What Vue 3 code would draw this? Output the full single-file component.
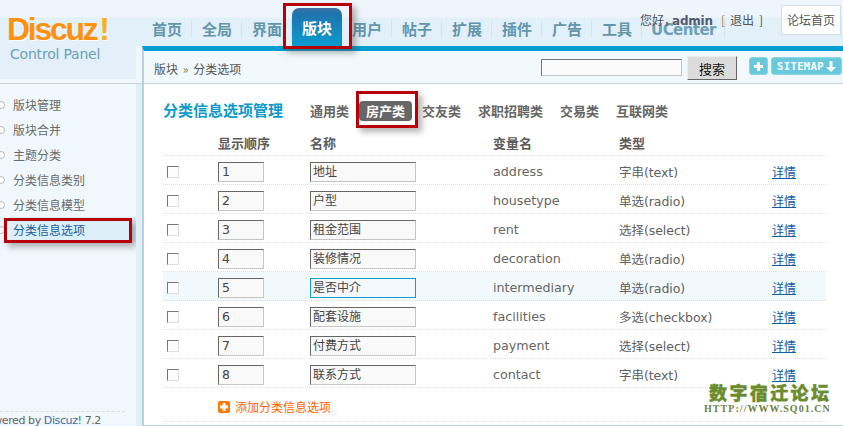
<script setup>
const menu = ['版块管理', '版块合并', '主题分类', '分类信息类别', '分类信息模型', '分类信息选项']
const nav = ['首页', '全局', '界面', '版块', '用户', '帖子', '扩展', '插件', '广告', '工具', 'UCenter']
const tabs = ['通用类', '房产类', '交友类', '求职招聘类', '交易类', '互联网类']
const rows = [
  ['1', '地址', 'address', '字串(text)'],
  ['2', '户型', 'housetype', '单选(radio)'],
  ['3', '租金范围', 'rent', '选择(select)'],
  ['4', '装修情况', 'decoration', '单选(radio)'],
  ['5', '是否中介', 'intermediary', '单选(radio)'],
  ['6', '配套设施', 'facilities', '多选(checkbox)'],
  ['7', '付费方式', 'payment', '选择(select)'],
  ['8', '联系方式', 'contact', '字串(text)'],
]
</script>

<template>
  <div class="page">
    <header class="head">
      <div class="logo">
        <div class="brand">Discuz<span>!</span></div>
        <div class="cp">Control Panel</div>
      </div>
      <nav class="nav">
        <a v-for="n in nav" :key="n" :class="['nav-item', { on: n === '版块', wide: n === 'UCenter' }]">{{ n }}</a>
      </nav>
      <div class="user">您好，<b>admin</b><i>[</i>退出<i>]</i></div>
      <div class="home">论坛首页</div>
      <div class="mark mark-nav"></div>
    </header>

    <div class="body">
      <aside class="side">
        <div class="side-top"></div>
        <div class="side-low">
          <ul class="menu">
            <li v-for="m in menu" :key="m" :class="{ on: m === '分类信息选项' }"><s></s>{{ m }}</li>
          </ul>
          <div class="mark mark-side"></div>
          <div class="foot">Powered by <a>Discuz!</a> 7.2</div>
        </div>
      </aside>

      <main class="main">
        <div class="crumb">
          <span class="path">版块 <em>»</em> 分类选项</span>
          <div class="search">
            <span class="field"></span>
            <span class="go">搜索</span>
          </div>
          <span class="pill plus">
            <svg width="11" height="11" viewBox="0 0 11 11"><path d="M4 1h3v3h3v3H7v3H4V7H1V4h3z" fill="#fff"/></svg>
          </span>
          <span class="pill site">SITEMAP<svg width="10" height="11" viewBox="0 0 10 11"><path d="M3.500 0h3v6H10L5 11 0 6h3.500z" fill="#fff"/></svg></span>
        </div>

        <section class="content">
          <div class="title-row">
            <h3>分类信息选项管理</h3>
            <div class="tabs">
              <a v-for="t in tabs" :key="t" :class="['tab', { on: t === '房产类' }]">{{ t }}</a>
            </div>
            <div class="mark mark-tab"></div>
          </div>

          <div class="row th">
            <span></span><span>显示顺序</span><span>名称</span><span>变量名</span><span>类型</span><span></span>
          </div>
          <div v-for="r in rows" :key="r[0]" :class="['row', 'item', { hover: r[0] === '5' }]">
            <span class="check"></span>
            <span class="inp num">{{ r[0] }}</span>
            <span :class="['inp', 'name', { focus: r[0] === '5' }]">{{ r[1] }}</span>
            <span class="var">{{ r[2] }}</span>
            <span class="type">{{ r[3] }}</span>
            <a class="more">详情</a>
          </div>
          <div class="row add">
            <span></span>
            <a class="add-link">
              <svg width="12" height="12" viewBox="0 0 12 12"><rect width="12" height="12" rx="2" fill="#f70"/><path d="M4.500 2h3v2.500H10v3H7.500V10h-3V7.500H2v-3h2.500z" fill="#fff"/></svg>
              添加分类信息选项
            </a>
          </div>
          <div class="wm">
            <b>数字宿迁论坛</b>
            <span>HTTP://WWW.SQ01.CN</span>
          </div>
        </section>
      </main>
    </div>
  </div>
</template>

<style>
html, body { margin: 0; padding: 0; background: #eef7fc; overflow: hidden; }
</style>

<style scoped>
.page {
  width: 843px; height: 426px; overflow: hidden; position: relative;
  font-family: "Noto Sans CJK SC", "Liberation Sans", sans-serif; font-size: 12px; color: #666;
  background: #f0f8fd;
}
.head {
  height: 46px; display: flex; position: relative; z-index: 2;
  background: linear-gradient(#eef5fc 0, #eef5fc 17px, #e2f0f9 18px, #e3f0f9 46px);
}
.logo { width: 142px; flex: none; box-sizing: border-box; padding: 14px 0 0 7px; }
.brand {
  font: bold 32px/30px "Liberation Sans", sans-serif; letter-spacing: -2.300px; color: #ff9010;
  text-shadow: 1px 1px 0 #fff;
}
.brand span { color: #ffb020; margin-left: 3px; }
.cp { font: 14px/16px "DejaVu Sans", sans-serif; color: #6d9fb4; margin: 2px 0 0 3px; letter-spacing: -.2px; white-space: nowrap; }
.nav { display: flex; align-items: flex-end; }
.nav-item {
  width: 50px; height: 38px; box-sizing: border-box; text-align: center; position: relative;
  font: bold 15px/30px "Noto Sans CJK SC", sans-serif; color: #6296ab; padding-top: 6px;
}
.nav-item::after { content: ""; position: absolute; right: 0; top: 12px; height: 18px; width: 1px; background: #d5e3ea; }
.nav-item.wide { width: 83px; font: bold 15px/30px "DejaVu Sans", sans-serif; letter-spacing: -.55px; color: #6f9fb6; padding-top: 7px; }
.nav-item.on {
  color: #fff; border-radius: 7px 7px 0 0; padding-top: 5px;
  background: linear-gradient(#3f70a6 0, #1f74ae 6px, #0a9ccf 100%);
}
.nav-item.on::after { display: none; }
.mark { position: absolute; box-sizing: border-box; border: 3px solid #b80009; box-shadow: 4px 4px 6px rgba(70,70,70,.4); pointer-events: none; z-index: 5; }
.mark-nav { left: 283px; top: 3px; width: 69px; height: 46px; }
.user { position: absolute; left: 640px; top: 11px; line-height: 18px; font-size: 12px; color: #555; white-space: nowrap; }
.user b { font: bold 12px "DejaVu Sans", sans-serif; color: #565a70; margin: 0 8px 0 -4px; letter-spacing: -.2px; }
.user i { font-style: normal; margin: 0 5px 0 0; color: #555; }
.user i:first-of-type { color: #a98345; margin-right: 5px; }
.user i:last-of-type { margin-left: 5px; }
.home {
  position: absolute; left: 781px; top: 5px; width: 60px; height: 30px; box-sizing: border-box;
  background: #fff; border: 1px solid #cfdfe8; text-align: center; line-height: 28px; color: #555; font-size: 12px;
}
.body { display: flex; height: 380px; }
.side { width: 142px; flex: none; height: 380px; display: flex; flex-direction: column; overflow: hidden; }
.side-top {
  height: 38px; flex: none; box-sizing: border-box; border-bottom: 1px solid #c6d6dc;
  background: linear-gradient(90deg, #e3f0f9 136px, #f0f7fc 136px);
  box-shadow: inset 0 -4px 0 #f0f8fd;
}
.side-low { flex: 1; box-sizing: border-box; background: #f0f8fd; border-right: 6px solid #e0eff8; position: relative; overflow: hidden; }
.menu { list-style: none; margin: 8px 0 0; padding: 0; }
.menu li { height: 25px; line-height: 25px; padding-left: 13px; position: relative; color: #6a6a6a; white-space: nowrap; }
.menu li s { position: absolute; left: -3px; top: 9px; width: 6px; height: 6px; border: 1px solid #bbb; border-radius: 50%; background: #fff; }
.menu li.on { color: #1b5e9c; background: #dceef8; margin-left: 9px; padding-left: 4px; }
.menu li.on s { left: -12px; }
.mark-side { left: 4px; top: 134px; width: 128px; height: 25px; }
.foot {
  position: absolute; left: -19px; right: 0; bottom: -3px; height: 16px; line-height: 16px; white-space: nowrap;
  color: #666; font-family: "DejaVu Sans", sans-serif; font-size: 11px; letter-spacing: -.4px;
}
.foot::before { content: ""; position: absolute; left: 19px; width: 125px; top: -2px; border-top: 1px dashed #d3dde2; }
.foot a { color: #3a6f9c; }
.main { flex: 1; border-left: 2px solid #b8d2de; border-top: 5px solid #029dcf; border-bottom: 1px solid #b8d2de; min-width: 0; display: flex; flex-direction: column; }
.crumb {
  height: 33px; box-sizing: border-box; border-bottom: 1px solid #c6d6dc; background: #f1f9fd; flex: none;
  display: flex; align-items: center; padding-left: 10px;
}
.path { color: #555; width: 387px; flex: none; margin-top: 3px; white-space: nowrap; }
.path em { font-style: normal; color: #8a7b50; margin: 0 2px; }
.search { display: flex; align-items: center; margin-top: 1px; }
.field { display: block; width: 141px; height: 17px; box-sizing: border-box; background: #fbfbfb; border: 1px solid; border-color: #777 #c4c4c4 #c4c4c4 #777; }
.go {
  display: block; width: 50px; height: 24px; box-sizing: border-box; margin-left: 5px; text-align: center; line-height: 23px; font-size: 13px; color: #111;
  background: #dcdcdc; border: 1px solid; border-color: #eee #666 #666 #eee;
}
.pill { height: 18px; box-sizing: border-box; border-radius: 3px; background: #69c9dc; border: 1px solid #8cd6e4; display: flex; align-items: center; justify-content: center; margin-top: -2px; }
.plus { width: 19px; margin-left: 12px; }
.site { width: 71px; margin-left: 3px; color: #fff; font: bold 10.500px "DejaVu Sans Mono", monospace; gap: 2px; letter-spacing: .4px; }
.content { flex: 1; background: #fff; position: relative; padding: 0 17px 0 19px; }
.title-row { height: 58px; display: flex; align-items: flex-start; }
h3 { margin: 16px 0 0; width: 147px; flex: none; font-size: 15px; line-height: 20px; font-weight: bold; color: #0a9acb; white-space: nowrap; }
.tabs { display: flex; gap: 17px; margin-top: 17px; }
.tab { font-weight: bold; font-size: 13px; color: #666; line-height: 20px; white-space: nowrap; }
.tab.on { background: #666; color: #fff; width: 53px; height: 20px; text-align: center; border-radius: 4px; margin: 0 -7px; }
.mark-tab { left: 212px; top: 7px; width: 62px; height: 37px; }
.row {
  display: grid; grid-template-columns: 55px 92px 183px 126px 153px 1fr; align-items: center;
  height: 29px; box-sizing: border-box; border-bottom: 1px dotted #cfe3ef; color: #666; font-size: 13px;
}
.row.item { padding-top: 3px; }
.th { height: 24px; font-weight: bold; font-size: 13px; color: #5b5b5b; margin-top: -10px; padding-bottom: 3px; }
.check { display: block; width: 12px; height: 12px; margin-left: 4px; box-sizing: border-box; background: #fcfcfc; border: 1px solid; border-color: #777 #ddd #ddd #777; }
.inp {
  display: block; height: 20px; box-sizing: border-box; background: #f9f9f9; border: 1px solid; border-color: #666 #c5c5c5 #c5c5c5 #666;
  line-height: 16px; padding-left: 2px; font-size: 12px; color: #444;
}
.num { width: 46px; font: 12.500px/18px "DejaVu Sans", sans-serif; color: #444; padding-left: 3px; }
.name { width: 106px; }
.name.focus { border-color: #0a9dcf; background: #f3f9fd; }
.var { font: 12.700px "DejaVu Sans", sans-serif; color: #666; }
.type { font: 12.500px "DejaVu Sans", "Noto Sans CJK SC", sans-serif; color: #5f5f5f; white-space: nowrap; letter-spacing: -.05px; }
.more { color: #135d9c; text-decoration: underline; font-size: 12px; }
.row.hover { background: #f2f9fc; }
.add { height: 34px; }
.add-link { grid-column: 2 / 4; color: #f60; font-size: 12px; display: flex; align-items: center; gap: 5px; margin-top: 4px; }
.wm { position: absolute; left: 564px; top: 298px; width: 130px; pointer-events: none; }
.wm b { display: block; font: 900 18px/20px "Noto Sans CJK SC", sans-serif; color: #6b8c2e; letter-spacing: 2.400px; white-space: nowrap; -webkit-text-stroke: .4px #6b8c2e; margin-left: 1px; }
.wm span { display: block; font: bold 10px/12px "Liberation Serif", serif; color: #6f8040; letter-spacing: 1.050px; white-space: nowrap; margin: 1px 0 0 -4px; }
</style>
